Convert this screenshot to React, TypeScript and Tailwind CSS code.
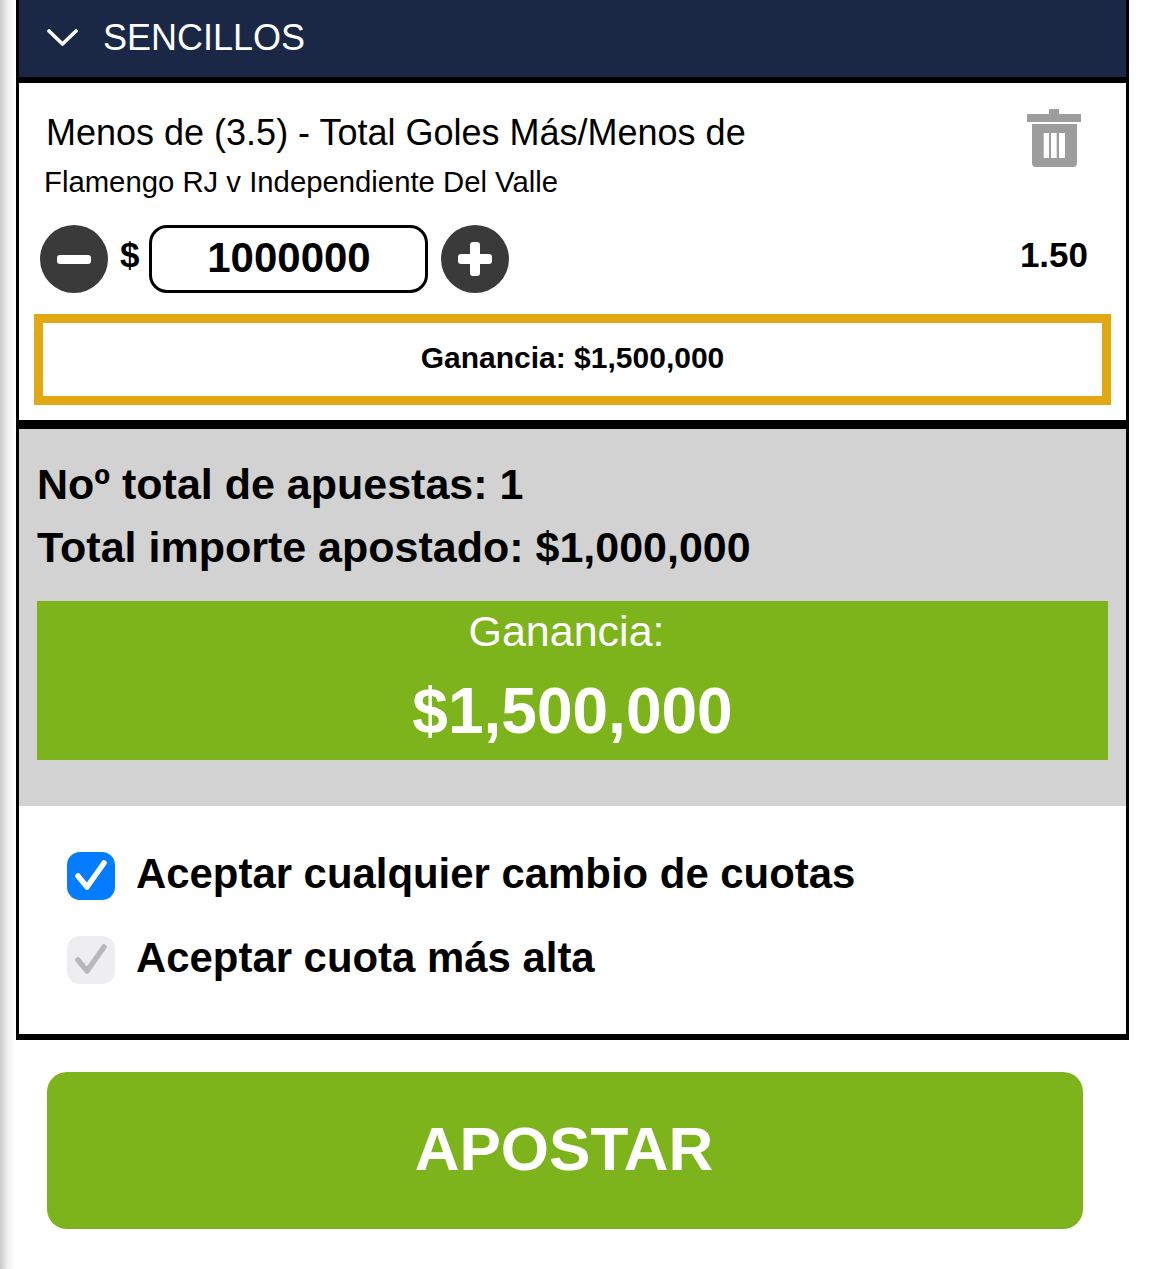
export default function App() {
  return (
    <div className="relative h-[1269px] w-[1153px] overflow-hidden bg-[linear-gradient(to_right,#c9c9c9_0px,#f2f2f2_8px,#ffffff_15px)] pl-4 font-['Liberation_Sans',Arial,sans-serif] text-black">
      <div className="w-[1113px] border-x-[3px] border-b-[6px] border-black bg-white">
        {/* header */}
        <div className="flex h-[77px] items-center bg-[#1b2845] pb-[2px] pl-[28px] text-white">
          <svg width="32" height="20" viewBox="0 0 32 20" fill="none" stroke="white" strokeWidth="3.6" strokeLinecap="round" strokeLinejoin="round">
            <path d="M2 3 L15.5 16 L29 3" />
          </svg>
          <span className="ml-[24px] text-[36px] leading-none">SENCILLOS</span>
        </div>
        <div className="h-[6px] bg-black" />

        {/* selection */}
        <div className="h-[337px] px-[15px]">
          <div className="flex items-start justify-between">
            <div className="pt-[28px]">
              <div className="ml-[12px] text-[36px] leading-[44px]">Menos de (3.5) - Total Goles Más/Menos de</div>
              <div className="ml-[10px] mt-[10px] text-[29.3px] leading-[34px]">Flamengo RJ v Independiente Del Valle</div>
            </div>
            <svg className="mr-[30px] mt-[26px]" width="54" height="58" viewBox="0 0 54 58" fill="#9d9d9d">
              <path d="M22 1 Q22 0 23 0 H31 Q32 0 32 1 V5 H54 V13 H0 V5 H22Z" />
              <path fillRule="evenodd" d="M5 15 H50 V54 Q50 58 46 58 H9 Q5 58 5 54Z M16.7 24 V49 H22 V24Z M24 24 V49 H29.7 V24Z M32 24 V49 H38 V24Z" />
            </svg>
          </div>

          <div className="mt-[26px] flex items-start">
            <div className="ml-[6px] flex h-[68px] w-[68px] items-center justify-center rounded-full bg-[#3a3a3a]">
              <div className="h-[9px] w-[34px] rounded-[3px] bg-white" />
            </div>
            <span className="ml-[12px] mt-[10px] text-[35px] font-bold leading-[40px]">$</span>
            <div className="ml-[10px] flex h-[68px] w-[279px] items-center justify-center rounded-[18px] border-[3px] border-black pb-[4px] text-[42px] font-bold">1000000</div>
            <div className="relative ml-[13px] h-[68px] w-[68px] rounded-full bg-[#3a3a3a]">
              <div className="absolute left-[17px] top-[29px] h-[10px] w-[34px] rounded-[3px] bg-white" />
              <div className="absolute left-[29px] top-[17px] h-[34px] w-[10px] rounded-[3px] bg-white" />
            </div>
            <span className="ml-auto mr-[23px] mt-[9px] text-[35px] font-bold leading-[42px]">1.50</span>
          </div>

          <div className="mt-[21px] flex h-[91px] w-[1077px] items-center justify-center border-[9px] border-[#e2a814] pb-[4px] text-[30px] font-bold">
            Ganancia: $1,500,000
          </div>
        </div>
        <div className="h-[9px] bg-black" />

        {/* totals */}
        <div className="h-[377px] bg-[#d2d2d2] pl-[18px] pt-[29px]">
          <div className="text-[43px] font-bold leading-[52px]">Noº total de apuestas: 1</div>
          <div className="mt-[11px] text-[43px] font-bold leading-[52px]">Total importe apostado: $1,000,000</div>
          <div className="mt-[28px] h-[159px] w-[1071px] bg-[#7db31b] text-center text-white">
            <div className="pr-[12px] pt-[5px] text-[43px] leading-[50px]">Ganancia:</div>
            <div className="mt-[10px] text-[64px] font-bold leading-[90px]">$1,500,000</div>
          </div>
        </div>

        {/* options */}
        <div className="flex h-[228px] flex-col gap-[36px] pl-[48px] pt-[46px]">
          <div className="flex items-center">
            <div className="flex h-[48px] w-[48px] items-center justify-center rounded-[13px] bg-[#047cff]">
              <svg width="32" height="32" viewBox="0 0 32 32" fill="none" stroke="white" strokeWidth="5.5" strokeLinecap="round" strokeLinejoin="round">
                <path d="M3 16 L12 27 L29 3" />
              </svg>
            </div>
            <span className="mb-[5px] ml-[21px] text-[41.9px] font-bold leading-[43px]">Aceptar cualquier cambio de cuotas</span>
          </div>
          <div className="flex items-center">
            <div className="flex h-[48px] w-[48px] items-center justify-center rounded-[13px] bg-[#eeeef0]">
              <svg width="32" height="32" viewBox="0 0 32 32" fill="none" stroke="#b8b8ba" strokeWidth="5.5" strokeLinecap="round" strokeLinejoin="round">
                <path d="M3 16 L12 27 L29 3" />
              </svg>
            </div>
            <span className="mb-[5px] ml-[21px] text-[41.9px] font-bold leading-[43px]">Aceptar cuota más alta</span>
          </div>
        </div>
      </div>

      <button className="ml-[31px] mt-[32px] flex h-[157px] w-[1036px] items-center justify-center rounded-[20px] bg-[#7db31b] pb-[4px] pr-[2px] text-[62px] font-bold text-white">
        APOSTAR
      </button>
    </div>
  );
}
